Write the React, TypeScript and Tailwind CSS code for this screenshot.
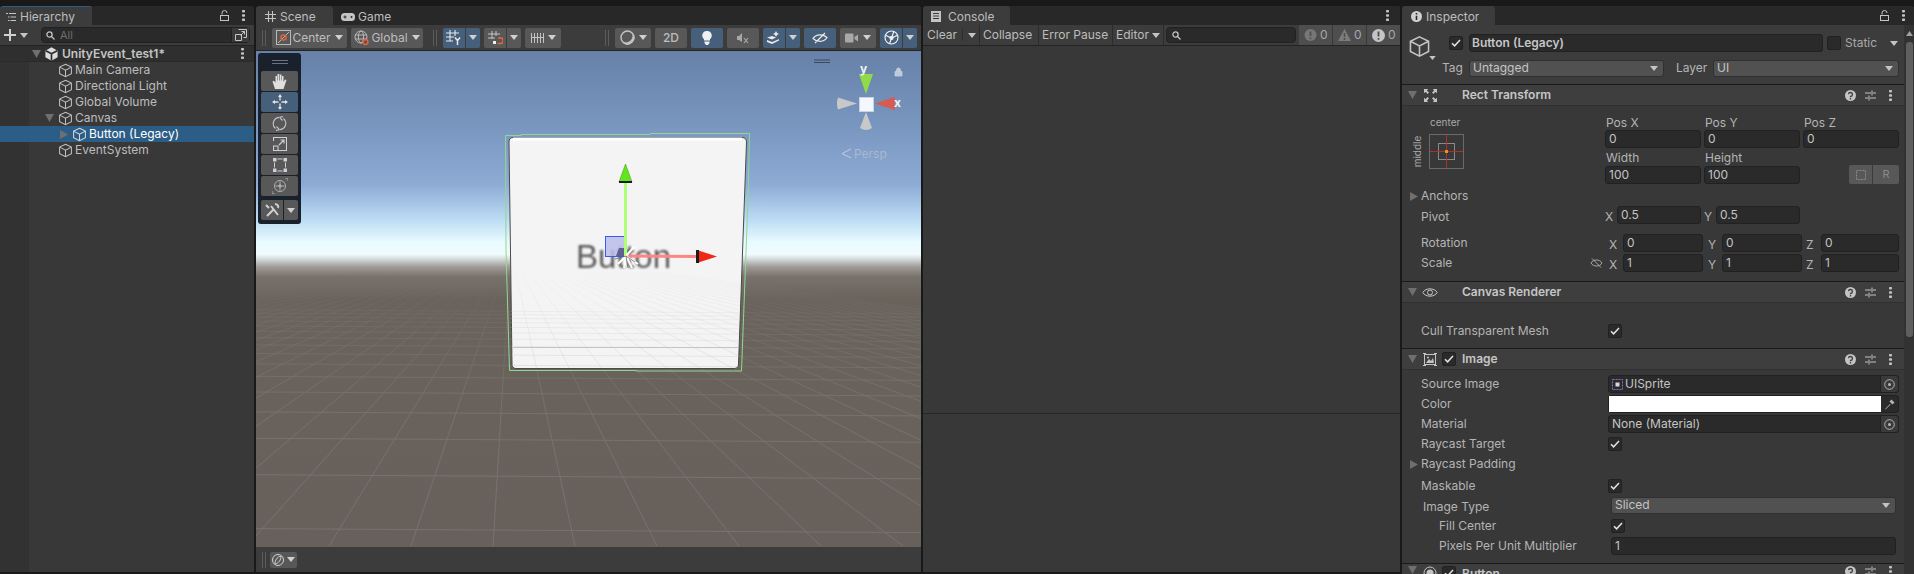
import React from "react";

const Caret = ({ c = "#c4c4c4", w = 8, h = 5 }: { c?: string; w?: number; h?: number }) => (
  <svg width={w} height={h} viewBox="0 0 8 5" className="shrink-0"><path d="M0 0H8L4 5Z" fill={c} /></svg>
);
const Down = ({ c = "#6f6f6f" }: { c?: string }) => (
  <svg width="9" height="8" viewBox="0 0 9 8" className="shrink-0"><path d="M0 0H9L4.5 8Z" fill={c} /></svg>
);
const Right = () => (
  <svg width="8" height="9" viewBox="0 0 8 9" className="shrink-0"><path d="M0 0V9L8 4.5Z" fill="#6f6f6f" /></svg>
);
const Cube = ({ c = "#c0c0c0", s = 15 }: { c?: string; s?: number }) => (
  <svg width={s} height={s} viewBox="0 0 16 16" fill="none" stroke={c} strokeWidth="1.1" className="shrink-0">
    <path d="M8 1.3 14.3 4.4V11.5L8 14.7 1.7 11.5V4.4ZM1.7 4.4 8 7.6 14.3 4.4M8 7.6V14.7" />
  </svg>
);
const Dots = ({ c = "#c4c4c4" }: { c?: string }) => (
  <svg width="3" height="11" viewBox="0 0 3 11" className="shrink-0" fill={c}>
    <rect y="0" width="3" height="2.4" rx=".8" /><rect y="4.3" width="3" height="2.4" rx=".8" /><rect y="8.6" width="3" height="2.4" rx=".8" />
  </svg>
);
const Lock = () => (
  <svg width="9" height="11" viewBox="0 0 9 11" fill="none" stroke="#c4c4c4" className="shrink-0">
    <path d="M2 4.5V3a2.5 2.5 0 0 1 5 0" /><rect x=".5" y="5.5" width="8" height="5" />
  </svg>
);
const Grip = () => (
  <div className="flex gap-[2px] h-[16px] shrink-0">
    <div className="w-[1px] bg-[#5c5c5c]" /><div className="w-[1px] bg-[#5c5c5c]" />
  </div>
);
const Mag = () => (
  <svg width="9" height="9" viewBox="0 0 9 9" fill="none" stroke="#c4c4c4" strokeWidth="1.3" className="shrink-0">
    <circle cx="3.5" cy="3.5" r="2.6" /><path d="M5.5 5.5 8.5 8.5" />
  </svg>
);
const Check = () => (
  <svg width="10" height="8" viewBox="0 0 10 8" fill="none" stroke="#e2e2e2" strokeWidth="1.5"><path d="M1 4.2 3.6 6.8 9 1" /></svg>
);
const CheckBox = ({ on = true }: { on?: boolean }) => (
  <div className="w-[14px] h-[14px] rounded-[2px] bg-[#2a2a2a] border border-[#212121] flex items-center justify-center shrink-0">{on && <Check />}</div>
);

const Tab = ({ icon, label, active, w, top }: { icon: React.ReactNode; label: string; active?: boolean; w: number; top?: boolean }) => (
  <div style={{ width: w }} className={`h-[19px] flex items-center text-[12px] text-[#bdbdbd] rounded-t-[3px] ${top ? "pt-[1px]" : "pt-[2px]"} ${active ? "bg-[#3c3c3c]" : ""} ${top ? "border-t border-[#2c5d87]" : ""}`}>
    {icon}<span className="truncate">{label}</span>
  </div>
);

/* ---------- Hierarchy ---------- */
const HRow = ({ indent, arrow, label, selected, down }: { indent: number; arrow?: boolean; label: string; selected?: boolean; down?: boolean }) => (
  <div className={`h-[16px] flex items-center ${selected ? "bg-[#2c5d87] text-white" : "text-[#bdbdbd]"} text-[12px]`}>
    <div className="shrink-0 flex justify-end items-center pr-[4px]" style={{ width: indent }}>
      {arrow && (down ? <Down /> : <Right />)}
    </div>
    <Cube c={selected ? "#d8d8d8" : "#c0c0c0"} />
    <span className="ml-[2px]">{label}</span>
  </div>
);

const Hierarchy = () => (
  <div className="w-[254px] shrink-0 bg-[#383838] flex flex-col rounded-t-[3px] overflow-hidden">
    <div className="h-[19px] bg-[#282828] flex items-center">
      <Tab
        w={92}
        top
        active
        label="Hierarchy"
        icon={
          <svg width="12" height="10" viewBox="0 0 12 10" stroke="#c4c4c4" className="ml-[5px] mr-[3px]">
            <path d="M1 1.5H3M4 1.5H11M3 5H4.5M5.5 5H11M3 8.5H4.5M5.5 8.5H11" />
          </svg>
        }
      />
      <div className="ml-auto flex items-center gap-[13px] pr-[9px]"><Lock /><Dots /></div>
    </div>
    <div className="h-[21px] bg-[#3c3c3c] flex items-center border-b border-[#232323] pl-[4px] pr-[4px]">
      <svg width="12" height="12" viewBox="0 0 12 12" fill="#d0d0d0" className="shrink-0"><path d="M5 0H7V5H12V7H7V12H5V7H0V5H5Z" /></svg>
      <div className="ml-[4px]"><Caret /></div>
      <div className="ml-[13px] flex-1 h-[16px] rounded-[4px] bg-[#2a2a2a] border border-[#212121] flex items-center pl-[4px]">
        <Mag />
        <span className="ml-[5px] text-[11px] text-[#6f6f6f]">All</span>
        <div className="ml-auto w-[18px] h-[14px] flex items-center justify-center border-l border-[#212121] bg-[#3a3a3a]">
          <svg width="12" height="12" viewBox="0 0 12 12" fill="none" stroke="#c4c4c4"><path d="M3.5 .5H11.5V8.5H8.5M.5 5.5H6.5V11.5H.5ZM5.5 6.5 9.5 2.5M6.5 2.5H9.5V5.5" /></svg>
        </div>
      </div>
    </div>
    <div className="flex-1 bg-[linear-gradient(to_right,#323232_29px,#383838_29px)]">
      <div className="h-[16px] bg-[#2f2f2f] border-b border-[#2a2a2a] flex items-center text-[12px] font-semibold text-[#c4c4c4]">
        <div className="w-[44px] flex justify-end pr-[3px]"><Down /></div>
        <svg width="13" height="14" viewBox="0 0 13 14" className="shrink-0 ml-[1px]">
          <path d="M6.5 .3 12.6 3.7V10.3L6.5 13.7.4 10.3V3.7Z" fill="#dcdcdc" />
          <path d="M6.5 6.8V13.7M6.5 6.8.8 3.7M6.5 6.8 12.2 3.7" stroke="#2f2f2f" strokeWidth="1.7" />
        </svg>
        <span className="ml-[4px]">UnityEvent_test1*</span>
        <div className="ml-auto pr-[10px]"><Dots /></div>
      </div>
      <HRow indent={58} label="Main Camera" />
      <HRow indent={58} label="Directional Light" />
      <HRow indent={58} label="Global Volume" />
      <HRow indent={58} arrow down label="Canvas" />
      <HRow indent={72} arrow selected label="Button (Legacy)" />
      <HRow indent={58} label="EventSystem" />
    </div>
  </div>
);

/* ---------- Scene toolbar ---------- */
const TB = ({ w, blue, children, ml = 4 }: { w: number; blue?: boolean; children?: React.ReactNode; ml?: number }) => (
  <div style={{ width: w, marginLeft: ml }} className={`h-[20px] rounded-[2px] shrink-0 flex items-center justify-center ${blue ? "bg-[#46607c]" : "bg-[#585858]"}`}>{children}</div>
);
const Split = ({ w, blue, children, ml = 4 }: { w: number; blue?: boolean; children?: React.ReactNode; ml?: number }) => (
  <div style={{ width: w + 15, marginLeft: ml }} className="h-[20px] flex gap-[1px] shrink-0">
    <div className={`flex-1 rounded-l-[2px] flex items-center justify-center ${blue ? "bg-[#46607c]" : "bg-[#585858]"}`}>{children}</div>
    <div className={`w-[14px] rounded-r-[2px] flex items-center justify-center ${blue ? "bg-[#46607c]" : "bg-[#585858]"}`}><Caret c="#d0d0d0" /></div>
  </div>
);

const SceneToolbar = () => (
  <div className="h-[26px] bg-[#3c3c3c] border-b border-[#232323] flex items-center pl-[6px] text-[12px] text-[#bdbdbd]">
    <Grip />
    <TB w={75} ml={6}>
      <svg width="15" height="15" viewBox="0 0 15 15" fill="none" className="shrink-0">
        <rect x=".5" y=".5" width="14" height="14" stroke="#b8b8b8" />
        <path d="M2 13 13 2" stroke="#b8b8b8" /><circle cx="7.5" cy="7.5" r="2.6" stroke="#f0633a" strokeWidth="1.3" />
      </svg>
      <span className="ml-[1px]">Center</span><div className="ml-[4px]"><Caret c="#d0d0d0" /></div>
    </TB>
    <TB w={72}>
      <svg width="16" height="16" viewBox="0 0 16 16" fill="none" stroke="#b8b8b8" className="shrink-0">
        <circle cx="7" cy="7" r="6" /><ellipse cx="7" cy="7" rx="2.6" ry="6" /><path d="M1 5H13M1 9H13" />
        <circle cx="11.5" cy="12" r="2.5" stroke="#f0633a" strokeWidth="1.3" fill="#585858" />
      </svg>
      <span className="ml-[1px]">Global</span><div className="ml-[4px]"><Caret c="#d0d0d0" /></div>
    </TB>
    <div className="ml-[10px]"><Grip /></div>
    <Split w={22} blue ml={6}>
      <svg width="16" height="15" viewBox="0 0 16 15" fill="none" stroke="#e8e8e8" strokeWidth="1.1"><path d="M4 0V11M9 0V6M0 3H13M0 7H8M0 11H7" /><path d="M9 7.500 11.500 10.500 14 7.500M11.500 10.500V15" strokeWidth="1.500" /></svg>
    </Split>
    <Split w={22}>
      <svg width="15" height="14" viewBox="0 0 15 14" fill="none"><path d="M4 0V8M8 0V5M0 3H12M0 7H7" stroke="#c4c4c4" /><rect x="5" y="10" width="3" height="3" fill="#f0f0f0" /><path d="M10 7H12.5A2.5 2.5 0 0 1 12.5 12.5H9.5" stroke="#f0633a" strokeWidth="1.6" /></svg>
    </Split>
    <TB w={36}>
      <svg width="13" height="12" viewBox="0 0 13 12" stroke="#c4c4c4" className="shrink-0"><path d="M.5 1V11M3.5 1V11M6.5 1V11M9.5 1V11M12.5 1V11M0 5.5H13" /></svg>
      <div className="ml-[4px]"><Caret c="#d0d0d0" /></div>
    </TB>
    <div className="ml-[44px]"><Grip /></div>
    <TB w={36} ml={6}>
      <svg width="15" height="15" viewBox="0 0 15 15" fill="none" className="shrink-0">
        <circle cx="7.5" cy="7.5" r="6.5" stroke="#c4c4c4" strokeWidth="1.4" /><path d="M13 4.500A6.500 6.500 0 0 1 3 12.500 7.500 7.500 0 0 0 13 4.500Z" fill="#c4c4c4" stroke="#c4c4c4" />
      </svg>
      <div className="ml-[4px]"><Caret c="#d0d0d0" /></div>
    </TB>
    <TB w={32}><span className="font-medium">2D</span></TB>
    <TB w={32} blue>
      <svg width="10" height="14" viewBox="0 0 10 14" fill="#f0f0f0"><path d="M5 0A4.6 4.6 0 0 1 8 8.2V9.5H2V8.2A4.6 4.6 0 0 1 5 0ZM2.5 10.5H7.5V12L6 14H4L2.5 12Z" /></svg>
    </TB>
    <TB w={32}>
      <svg width="13" height="12" viewBox="0 0 13 12" fill="none"><path d="M0 4H2L5 1V10L2 8H0Z" fill="#a8a8a8" /><path d="M7 6 11 11M11 6 7 11" stroke="#a8a8a8" strokeWidth="1.2" /></svg>
    </TB>
    <Split w={22} blue>
      <svg width="14" height="14" viewBox="0 0 14 14" fill="#eaeaea"><path d="M9 0 10 2 12 3 10 4 9 6 8 4 6 3 8 2ZM0 6.5 5 5 9 6.5 5 8.5ZM0 9 5 11 10 9 12 8V9.5L5 13 0 11ZM0 9.5" /></svg>
    </Split>
    <TB w={32} blue>
      <svg width="16" height="12" viewBox="0 0 16 12" fill="none" stroke="#e8e8e8" strokeWidth="1.2"><path d="M1 6.5C4 2 11 1.500 15 5.500 12 10.500 5 10.500 1 6.500ZM3 11 13 1" /></svg>
    </TB>
    <TB w={36}>
      <svg width="13" height="10" viewBox="0 0 13 10" fill="#a8a8a8" className="shrink-0"><rect width="8.500" height="9" y=".5" rx="1" /><path d="M9.500 4 13 1.500V8.500L9.500 6Z" /></svg>
      <div className="ml-[5px]"><Caret c="#d0d0d0" /></div>
    </TB>
    <Split w={22} blue>
      <svg width="15" height="15" viewBox="0 0 15 15" fill="none" stroke="#f0f0f0" strokeWidth="1.2"><circle cx="7.500" cy="7.500" r="6.500" /><path d="M2 5.500 7.500 8 13 5.500M7.500 8 5.500 14M7.500 8 10 1" /><circle cx="7.500" cy="8" r="1.500" fill="#f0f0f0" /></svg>
    </Split>
  </div>
);

/* ---------- Scene viewport drawing ---------- */
const VP = { x: 511, y: 250 };
const radial = Array.from({ length: 51 }, (_, i) => i - 25).map((k) => {
  const bx = 493 + 82 * k;
  const t0 = 22 / 296;
  return { x1: VP.x + (bx - VP.x) * t0, y1: VP.y + 22, x2: bx, y2: 546 };
});
const rows = Array.from({ length: 16 }, (_, i) => {
  const inv = 0.00357 + 0.00085 * i;
  const y = 250 + 1 / inv;
  return { y1: y - 1.5, y2: y + 2.5 };
});

const GridLines = ({ stroke }: { stroke: string }) => (
  <g stroke={stroke} strokeWidth="1" fill="none">
    {radial.map((l, i) => <line key={i} {...l} />)}
    {rows.map((r, i) => <line key={i} x1="256" y1={r.y1} x2="921" y2={r.y2} />)}
  </g>
);

const ToolBtn = ({ blue, children }: { blue?: boolean; children: React.ReactNode }) => (
  <div className={`h-[20px] rounded-[2px] flex items-center justify-center ${blue ? "bg-[#46607c]" : "bg-[#585858]"}`}>{children}</div>
);

const ToolOverlay = () => (
  <div className="absolute left-[2px] top-[2px] w-[43px] h-[171px] bg-[#18212c] rounded-[3px] px-[3px] flex flex-col">
    <div className="h-[18px] flex flex-col items-center justify-center gap-[2px]">
      <div className="w-[16px] h-[1px] bg-[#6a7480]" /><div className="w-[16px] h-[1px] bg-[#6a7480]" />
    </div>
    <div className="flex flex-col gap-[1px]">
      <ToolBtn>
        <svg width="15" height="16" viewBox="0 0 15 16" fill="#e0e0e0"><path d="M3 16 .5 8.500 1.800 7.800 3.500 9.500V3H5V7.500H5.500V1H7.200V7.500H7.800V1.500H9.500V7.500H10V3H11.500V9L13 6.500 14.500 7 11.500 16Z" /></svg>
      </ToolBtn>
      <ToolBtn blue>
        <svg width="16" height="16" viewBox="0 0 16 16" fill="none" stroke="#e4e4e4" strokeWidth="1.300"><path d="M8 3V6.500M8 9.500V13M3 8H6.500M9.500 8H13" /><path d="M8 0 10 3H6ZM8 16 6 13H10ZM0 8 3 6V10ZM16 8 13 10V6Z" fill="#e4e4e4" stroke="none" /></svg>
      </ToolBtn>
      <ToolBtn>
        <svg width="15" height="15" viewBox="0 0 15 15" fill="none" stroke="#c4c4c4" strokeWidth="1.100"><path d="M3.500 12.500A6.300 6.300 0 0 1 7 1.400M11.500 2.500A6.300 6.300 0 0 1 8 13.600" /><path d="M7.500 1.300 11 .6M7.500 1.300 10.500 4.500M7.500 13.700 4 14.400M7.500 13.700 4.500 10.500" /></svg>
      </ToolBtn>
      <ToolBtn>
        <svg width="14" height="14" viewBox="0 0 14 14" fill="none" stroke="#d0d0d0" strokeWidth="1.100"><path d="M.5 4V.5H13.500V13.500H4M.5 9H5V13.500H.5ZM6 8 11 3M7.500 3H11V6.500" /></svg>
      </ToolBtn>
      <ToolBtn>
        <svg width="14" height="14" viewBox="0 0 14 14" fill="#d0d0d0"><rect width="3.500" height="3.500" /><rect x="10.500" width="3.500" height="3.500" /><rect y="10.500" width="3.500" height="3.500" /><rect x="10.500" y="10.500" width="3.500" height="3.500" /><path d="M4.500 1H9.500M4.500 13H9.500M1.500 4.500V9.500M12.500 4.500V9.500" stroke="#d0d0d0" /></svg>
      </ToolBtn>
      <ToolBtn>
        <svg width="16" height="16" viewBox="0 0 16 16" fill="none" stroke="#b0b0b0"><circle cx="8" cy="8" r="5.500" /><path d="M8 3.500V12.500M3.500 8H12.500M0 13V16H3M13 0H16V3" /><path d="M6 8 8 6 10 8 8 10Z" fill="#b0b0b0" stroke="none" /></svg>
      </ToolBtn>
    </div>
    <div className="flex gap-[1px] h-[20px] mt-[4px]">
      <div className="w-[22px] bg-[#585858] rounded-l-[2px] flex items-center justify-center">
        <svg width="15" height="15" viewBox="0 0 15 15" fill="none" stroke="#d0d0d0" strokeWidth="2"><path d="M2 13 9 6M6 3 13 12M10 1C12 1 14 3 13 5M1 2 4 5" /></svg>
      </div>
      <div className="w-[14px] bg-[#585858] rounded-r-[2px] flex items-center justify-center"><Caret c="#d0d0d0" /></div>
    </div>
  </div>
);

const SceneArt = () => (
  <svg viewBox="256 51 665 496" width="665" height="496" className="block">
    <defs>
      <clipPath id="spriteClip"><path d="M513 138H742Q746 138 746 142L738 364Q738 368 734 368H516Q512 368 512 364L509 142Q509 138 513 138Z" /></clipPath>
      <linearGradient id="fadeGround" gradientUnits="userSpaceOnUse" x1="0" y1="268" x2="0" y2="420">
        <stop offset="0" stopColor="#767270" stopOpacity="0" /><stop offset=".4" stopColor="#767270" stopOpacity=".5" /><stop offset="1" stopColor="#767270" stopOpacity="1" />
      </linearGradient>
      <linearGradient id="fadeSprite" gradientUnits="userSpaceOnUse" x1="0" y1="262" x2="0" y2="365">
        <stop offset="0" stopColor="#dedede" stopOpacity="0" /><stop offset=".4" stopColor="#dedede" stopOpacity=".35" /><stop offset="1" stopColor="#d8d8d8" stopOpacity=".6" />
      </linearGradient>
    </defs>
    <GridLines stroke="url(#fadeGround)" />
    <path d="M513 137.500H742Q746.500 137.500 746.500 142L738.500 364Q738.500 368.500 734 368.500H516Q512 368.500 512 364L509 142Q509 137.500 513 137.500Z" fill="#f4f4f4" stroke="#4a4a4a" strokeWidth="1" />
    <path d="M513 139H742" stroke="#ffffff" strokeWidth="3" />
    <g clipPath="url(#spriteClip)"><GridLines stroke="url(#fadeSprite)" /></g>
    <path d="M512 347.500H738" stroke="#c4c4c4" />
    <path d="M505.500 135.500H521V134.500H650V133.500H749.500L748 200 741.500 371H636V370.500H509.500L506 250Z" fill="none" stroke="#90d890" strokeWidth="1" />
    <text x="576" y="268" fontFamily="Liberation Sans, sans-serif" fontSize="33" fill="#5a5a5a" textLength="95" className="blur-[1px]">Button</text>
    <rect x="605.500" y="236.500" width="19" height="20" fill="#b8bcea" fillOpacity=".85" stroke="#3a5af0" />
    <path d="M619 248 616 256H624V248ZM619 248" fill="#5f5f90" />
    <line x1="626" y1="256" x2="697" y2="256.500" stroke="#ff8585" strokeWidth="3" />
    <path d="M697 250V263L717 256.500Z" fill="#ee2a16" />
    <rect x="696" y="250" width="3" height="13" fill="#1c1c1c" />
    <line x1="625.500" y1="256" x2="625.500" y2="182" stroke="#aeff78" strokeWidth="3" />
    <path d="M625.500 164 619 182H632Z" fill="#62e61e" stroke="#3a8a10" strokeWidth=".5" />
    <rect x="619" y="181" width="13" height="2" fill="#1c1c1c" />
    <g stroke="#ffffff" strokeWidth="2">
      <path d="M626 256 618 264M626 256 624 268M626 256 632 268M626 256 638 264M626 256 634 247" />
    </g>
    <g stroke="#555" strokeWidth=".7"><path d="M626 256 615 259M626 256 628 268M626 256 635 262" /></g>
    {/* orientation gizmo */}
    <path d="M859 74 L873 74 L866 94Z" fill="#8fdc48" />
    <path d="M875 103.500 L895 97 V110Z" fill="#d85a50" />
    <path d="M857 103.500 L838 97.500Q836 103.500 838 109.500Z" fill="#c8c8c8" />
    <path d="M866 112 L860 128Q866 132 872 128Z" fill="#c8c8c8" />
    <rect x="859.500" y="97.500" width="14" height="14" fill="#f4f7ff" stroke="#c7d2e4" />
    <text x="860" y="73" fontFamily="Inter, sans-serif" fontSize="12" fontWeight="700" fill="#eef2f8">y</text>
    <text x="894" y="107" fontFamily="Inter, sans-serif" fontSize="12" fontWeight="700" fill="#eef2f8">x</text>
    <path d="M895 71.500H902V76H895ZM896.500 71.500V70A2 2 0 0 1 900.500 70V71.500" fill="#c8d2e0" stroke="#c8d2e0" fillOpacity=".9" strokeWidth=".7" />
    <path d="M814 60H830M814 62.500H830" stroke="#3d4a5c" />
    <path d="M851 149 842 153.500 851 158" fill="none" stroke="#c3cede" />
    <text x="854" y="158" fontFamily="Inter, sans-serif" fontSize="12" fill="#a9b9ce">Persp</text>
  </svg>
);

const Scene = () => (
  <div className="w-[665px] shrink-0 bg-[#3c3c3c] flex flex-col rounded-t-[3px] overflow-hidden">
    <div className="h-[19px] bg-[#282828] flex items-center">
      <Tab
        w={77}
        active
        label="Scene"
        icon={<svg width="11" height="11" viewBox="0 0 11 11" stroke="#c4c4c4" strokeWidth="1.1" className="ml-[9px] mr-[4px]"><path d="M3.500 0V11M7.500 0V11M0 3.500H11M0 7.500H11" /></svg>}
      />
      <div className="flex items-center text-[12px] text-[#bdbdbd] ml-[8px] pt-[2px]">
        <svg width="14" height="8" viewBox="0 0 14 8" className="mr-[3px]"><rect width="14" height="8" rx="3.500" fill="#c4c4c4" /><path d="M2.500 4H5.500M4 2.500V5.500" stroke="#2a2a2a" /><circle cx="10.500" cy="4" r="1" fill="#2a2a2a" /></svg>
        Game
      </div>
    </div>
    <SceneToolbar />
    <div className="relative h-[496px] overflow-hidden bg-[linear-gradient(to_bottom,#6781a8_0%,#7896bf_15%,#8eabd6_27%,#bcdcf4_34%,#e8fbff_38.500%,#f0fbfd_41%,#d2d8d8_42%,#a09c98_43.5%,#78726c_45.5%,#6a635c_50%,#68615b_100%)]">
      <SceneArt />
      <ToolOverlay />
    </div>
    <div className="h-[25px] flex items-center pl-[6px]">
      <Grip />
      <div className="ml-[4px] w-[27px] h-[16px] rounded-[2px] bg-[#585858] flex items-center justify-center gap-[3px]">
        <svg width="12" height="12" viewBox="0 0 12 12" fill="none" stroke="#d0d0d0"><circle cx="6" cy="6" r="5.500" /><path d="M3 10C3 6 5 3 9 2 9 6 7 9 3 10Z" /></svg>
        <Caret c="#d0d0d0" />
      </div>
    </div>
  </div>
);

/* ---------- Console ---------- */
const CBtn = ({ w, children }: { w: number; children: React.ReactNode }) => (
  <div style={{ width: w }} className="h-[20px] shrink-0 border-r border-[#2c2c2c] flex items-center pl-[3px] text-[12px] text-[#bdbdbd]">{children}</div>
);
const Count = ({ w, icon, ml = 0 }: { w: number; icon: React.ReactNode; ml?: number }) => (
  <div style={{ width: w, marginLeft: ml }} className="h-[20px] shrink-0 bg-[#4e4e4e] flex items-center pl-[5px] gap-[3px] text-[12px] text-[#a8a8a8] border-r border-[#383838]">{icon}<span>0</span></div>
);

const Console = () => (
  <div className="w-[477px] shrink-0 bg-[#383838] flex flex-col rounded-t-[3px] overflow-hidden">
    <div className="h-[19px] bg-[#282828] flex items-center">
      <Tab
        w={87}
        active
        label="Console"
        icon={<svg width="11" height="11" viewBox="0 0 11 11" className="ml-[8px] mr-[6px]"><path d="M0 0H10V11H0ZM2 2V3H8V2ZM2 4.500V5.500H8V4.500ZM2 7V8H8V7Z" fill="#c4c4c4" fillRule="evenodd" /></svg>}
      />
      <div className="ml-auto pr-[11px]"><Dots /></div>
    </div>
    <div className="h-[21px] bg-[#3c3c3c] border-b border-[#232323] flex items-center">
      <CBtn w={57}>
        <span className="ml-[1px]">Clear</span><div className="ml-[5px] w-[1px] h-[12px] bg-[#2c2c2c]" /><div className="ml-[5px]"><Caret /></div>
      </CBtn>
      <CBtn w={59}>Collapse</CBtn>
      <CBtn w={74}>Error Pause</CBtn>
      <CBtn w={51}>Editor<div className="ml-[3px]"><Caret /></div></CBtn>
      <div className="ml-[2px] w-[130px] h-[16px] rounded-[4px] bg-[#2a2a2a] border border-[#212121] flex items-center pl-[5px] shrink-0"><Mag /></div>
      <Count
        w={34}
        ml={3}
        icon={<svg width="13" height="13" viewBox="0 0 13 13"><circle cx="6.500" cy="6" r="6" fill="#777" /><path d="M6.500 2.500V7M6.500 8.500V10" stroke="#4e4e4e" strokeWidth="1.800" /></svg>}
      />
      <Count
        w={34}
        icon={<svg width="13" height="12" viewBox="0 0 13 12"><path d="M6.500 0 13 12H0Z" fill="#7c7c7c" /><path d="M6.500 4V8M6.500 9V11" stroke="#4e4e4e" strokeWidth="1.500" /></svg>}
      />
      <Count
        w={34}
        icon={<svg width="13" height="13" viewBox="0 0 13 13"><circle cx="6.500" cy="6.500" r="6.500" fill="#c4c4c4" /><path d="M6.500 2.500V7.500M6.500 9V10.800" stroke="#4e4e4e" strokeWidth="1.800" /></svg>}
      />
    </div>
    <div className="h-[368px] border-b border-[#262626]" />
    <div className="flex-1" />
  </div>
);

/* ---------- Inspector ---------- */
const Field = ({ w, children, grow }: { w?: number; children?: React.ReactNode; grow?: boolean }) => (
  <div style={w ? { width: w } : undefined} className={`h-[18px] shrink-0 ${grow ? "flex-1" : ""} rounded-[3px] bg-[#2a2a2a] border border-[#212121] flex items-center pl-[3px] text-[12px] text-[#c4c4c4]`}>{children}</div>
);
const Drop = ({ w, label }: { w: number; label: string }) => (
  <div style={{ width: w }} className="h-[17px] shrink-0 rounded-[3px] bg-[#515151] border border-[#303030] flex items-center justify-between pl-[3px] pr-[5px] text-[12px] text-[#c4c4c4]">
    <span>{label}</span><Caret />
  </div>
);
const Label = ({ children, cls = "" }: { children: React.ReactNode; cls?: string }) => (
  <span className={`text-[12px] text-[#b4b4b4] ${cls}`}>{children}</span>
);
const Row = ({ label, h = 20, pl = 19, children, arrow }: { label?: string; h?: number; pl?: number; children?: React.ReactNode; arrow?: boolean }) => (
  <div style={{ height: h }} className="flex items-center">
    <div style={{ paddingLeft: pl }} className="w-[206px] shrink-0 relative flex items-center">
      {arrow && <div className="absolute left-[8px]"><Right /></div>}
      <Label>{label}</Label>
    </div>
    {children}
  </div>
);
const SectionIcons = () => (
  <div className="ml-auto flex items-center pr-[12px]">
    <svg width="11" height="11" viewBox="0 0 11 11"><circle cx="5.500" cy="5.500" r="5.500" fill="#c4c4c4" /><path d="M3.500 4.200A2 2 0 1 1 5.500 6.500V7.300M5.500 8V9.500" fill="none" stroke="#3e3e3e" strokeWidth="1.300" /></svg>
    <svg width="11" height="11" viewBox="0 0 11 11" stroke="#c4c4c4" fill="none" className="ml-[9px]"><path d="M0 3H6M8 3H11M0 8H3M5 8H11M7 .5V5.500M4 5.500V10.500" /></svg>
    <div className="ml-[13px]"><Dots /></div>
  </div>
);
const Header = ({ icon, title, check }: { icon: React.ReactNode; title: string; check?: boolean }) => (
  <div className="h-[22px] shrink-0 bg-[#3e3e3e] border-t border-[#1a1a1a] border-b-[1px] border-b-[#303030] flex items-center pl-[6px]">
    <Down />
    <div className="w-[16px] ml-[5px] flex justify-center shrink-0">{icon}</div>
    <div className="ml-[4px] w-[16px]">{check && <CheckBox />}</div>
    <span className="ml-[4px] text-[12px] font-semibold text-[#c6c6c6]">{title}</span>
    <SectionIcons />
  </div>
);
const Pick = () => (
  <div className="ml-auto w-[18px] h-full flex items-center justify-center bg-[#3a3a3a] border-l border-[#212121] rounded-r-[3px] shrink-0">
    <svg width="11" height="11" viewBox="0 0 11 11" fill="none" stroke="#b4b4b4"><circle cx="5.500" cy="5.500" r="4.800" /><circle cx="5.500" cy="5.500" r="1.500" fill="#b4b4b4" stroke="none" /></svg>
  </div>
);

const PosCol = ({ label, w, value }: { label: string; w: number; value: string }) => (
  <div style={{ width: w }} className="shrink-0 flex flex-col">
    <div className="h-[15px] pl-[1px] flex items-center"><Label>{label}</Label></div>
    <Field w={w}>{value}</Field>
  </div>
);

const Triple = ({ label, v, icon }: { label: string; v: string; icon?: boolean }) => (
  <div className="h-[18px] flex items-center">
    <div className="w-[207px] pl-[19px] pr-[6px] shrink-0 flex items-center justify-between">
      <Label>{label}</Label>
      {icon && <svg width="13" height="10" viewBox="0 0 13 10" fill="none" stroke="#a8a8a8"><path d="M1 5C3 1 10 1 12 5 10 9 3 9 1 5ZM2 .5 11 9.500" /></svg>}
    </div>
    <div className="w-[14px]"><Label>X</Label></div><Field w={80}>{v}</Field>
    <div className="w-[14px] ml-[5px]"><Label>Y</Label></div><Field w={80}>{v}</Field>
    <div className="w-[15px] ml-[4px]"><Label>Z</Label></div><Field w={78}>{v}</Field>
  </div>
);

const RectTransform = () => (
  <div className="h-[175px] shrink-0 bg-[#383838] pt-[9px] pr-[5px]">
    <div className="flex h-[70px]">
      <div className="w-[203px] shrink-0 relative">
        <span className="absolute left-[28px] top-[0px] text-[10px] text-[#a8a8a8]">center</span>
        <span className="absolute left-[0px] top-[29px] text-[10px] text-[#a8a8a8] -rotate-90">middle</span>
        <svg width="36" height="36" viewBox="0 0 36 36" className="absolute left-[27px] top-[19px]" fill="none">
          <rect x=".5" y=".5" width="34" height="34" stroke="#6a6a6a" />
          <rect x="9.500" y="9.500" width="16" height="16" stroke="#8a8a8a" />
          <path d="M17.500 1V34M1 17.500H34" stroke="#b03030" />
          <rect x="16" y="16" width="3" height="3" fill="#d69a1c" />
        </svg>
      </div>
      <div className="flex-1 flex flex-col">
        <div className="flex gap-[3px]">
          <PosCol label="Pos X" w={96} value="0" />
          <PosCol label="Pos Y" w={96} value="0" />
          <PosCol label="Pos Z" w={96} value="0" />
        </div>
        <div className="flex gap-[3px] mt-[1px]">
          <div className="w-[96px] shrink-0 flex flex-col"><div className="h-[17px] pl-[1px] flex items-start"><Label>Width</Label></div><Field w={96}>100</Field></div>
          <div className="w-[96px] shrink-0 flex flex-col"><div className="h-[17px] pl-[1px] flex items-start"><Label>Height</Label></div><Field w={96}>100</Field></div>
          <div className="w-[96px] flex justify-end items-end">
            <div className="w-[50px] h-[19px] rounded-[2px] bg-[#585858] flex text-[11px] text-[#8a8a8a]">
              <div className="w-[24px] border-r border-[#3a3a3a] flex items-center justify-center">
                <svg width="10" height="10" viewBox="0 0 10 10" fill="none" stroke="#8a8a8a" strokeDasharray="2 1"><rect x=".5" y=".5" width="9" height="9" /></svg>
              </div>
              <div className="flex-1 flex items-center justify-center">R</div>
            </div>
          </div>
        </div>
      </div>
    </div>
    <div className="h-[16px] mt-[3px] flex items-center relative pl-[19px]">
      <div className="absolute left-[8px]"><Right /></div><Label>Anchors</Label>
    </div>
    <div className="h-[18px] mt-[2px] flex items-center">
      <div className="w-[203px] pl-[19px] shrink-0"><Label>Pivot</Label></div>
      <div className="w-[12px]"><Label>X</Label></div><Field w={84}>0.5</Field>
      <div className="w-[12px] ml-[3px]"><Label>Y</Label></div><Field w={84}>0.5</Field>
    </div>
    <div className="mt-[10px]"><Triple label="Rotation" v="0" /></div>
    <div className="mt-[2px]"><Triple label="Scale" v="1" icon /></div>
  </div>
);

const Inspector = () => (
  <div className="flex-1 bg-[#383838] flex flex-col rounded-t-[3px] overflow-hidden h-[568px]">
    <div className="h-[19px] shrink-0 bg-[#282828] flex items-center">
      <Tab
        w={93}
        active
        label="Inspector"
        icon={<svg width="11" height="11" viewBox="0 0 11 11" className="ml-[9px] mr-[4px]"><circle cx="5.500" cy="5.500" r="5.500" fill="#d0d0d0" /><path d="M5.500 2V3.500M5.500 4.800V9" stroke="#2a2a2a" strokeWidth="1.600" /></svg>}
      />
      <div className="ml-auto flex items-center gap-[13px] pr-[9px]"><Lock /><Dots /></div>
    </div>
    <div className="flex flex-1 min-h-0">
      <div className="w-[502px] shrink-0 flex flex-col overflow-hidden">
        <div className="h-[59px] shrink-0 bg-[#3c3c3c] relative">
          <div className="absolute left-[6px] top-[10px]"><Cube c="#c4c4c4" s={23} /></div>
          <div className="absolute left-[27px] top-[31px]"><Caret c="#c4c4c4" w={7} h={4} /></div>
          <div className="absolute left-[47px] top-[9px] flex items-center">
            <CheckBox />
            <div className="ml-[6px] w-[354px] h-[18px] rounded-[3px] bg-[#2a2a2a] border border-[#212121] flex items-center pl-[2px] text-[12px] font-semibold text-[#c6c6c6]">Button (Legacy)</div>
            <div className="ml-[4px]"><CheckBox on={false} /></div>
            <span className="ml-[4px] text-[12px] text-[#a8a8a8]">Static</span>
            <div className="ml-[13px]"><Caret /></div>
          </div>
          <div className="absolute left-[40px] top-[34px] flex items-center">
            <Label cls="w-[27px]">Tag</Label>
            <Drop w={195} label="Untagged" />
            <Label cls="ml-[12px] w-[37px]">Layer</Label>
            <Drop w={186} label="UI" />
          </div>
        </div>
        <Header
          title="Rect Transform"
          icon={<svg width="13" height="13" viewBox="0 0 13 13" fill="#c4c4c4"><path d="M0 0H4L3 1.800 5 3.500 3.500 5 1.800 3 0 4ZM13 0V4L11.200 3 9.500 5 8 3.500 10 1.800 9 0ZM0 13V9L1.800 10 3.500 8 5 9.500 3 11.200 4 13ZM13 13H9L10 11.200 8 9.500 9.500 8 11.200 10 13 9Z" /></svg>}
        />
        <RectTransform />
        <Header
          title="Canvas Renderer"
          icon={<svg width="16" height="11" viewBox="0 0 16 11" fill="none" stroke="#c4c4c4"><path d="M.8 5.500C3.500.6 12.500.6 15.200 5.500 12.500 10.400 3.500 10.400.8 5.500Z" /><circle cx="8" cy="5.500" r="2.500" /></svg>}
        />
        <div className="h-[45px] shrink-0 bg-[#383838] pt-[18px]">
          <Row label="Cull Transparent Mesh"><CheckBox /></Row>
        </div>
        <Header
          check
          title="Image"
          icon={<svg width="14" height="13" viewBox="0 0 14 13" fill="none" stroke="#c4c4c4"><rect x="1.500" y="1.500" width="11" height="10" /><path d="M0 .5H3M11 .5H14M0 12.500H3M11 12.500H14" /><path d="M3 10 6 6 8 8 10 5 11 10Z" fill="#c4c4c4" stroke="none" /><circle cx="5" cy="4.500" r="1" fill="#c4c4c4" stroke="none" /></svg>}
        />
        <div className="flex-1 bg-[#383838] pt-[4px]">
          <Row label="Source Image" h={20}>
            <div className="w-[291px] h-[18px] rounded-[3px] bg-[#2a2a2a] border border-[#212121] flex items-center pl-[3px] text-[12px] text-[#c4c4c4]">
              <svg width="11" height="11" viewBox="0 0 11 11" fill="none" className="mr-[2px]"><rect x=".5" y=".5" width="10" height="10" stroke="#8a6cc8" strokeDasharray="2 1" /><rect x="3.500" y="3.500" width="4" height="4" fill="#d8d8d8" /></svg>
              UISprite<Pick />
            </div>
          </Row>
          <Row label="Color" h={20}>
            <div className="w-[291px] h-[18px] rounded-[3px] bg-[#2a2a2a] border border-[#212121] flex items-center">
              <div className="w-[272px] h-full bg-white shrink-0" />
              <div className="flex-1 flex justify-center">
                <svg width="11" height="11" viewBox="0 0 11 11" fill="#b4b4b4"><path d="M7.500.5 10.500 3.500 8.500 5.500 5.500 2.500ZM6 5 1.500 9.500 1 10.500 2 10 6.500 5.500Z" /></svg>
              </div>
            </div>
          </Row>
          <Row label="Material" h={20}>
            <div className="w-[291px] h-[18px] rounded-[3px] bg-[#2a2a2a] border border-[#212121] flex items-center pl-[3px] text-[12px] text-[#c4c4c4]">
              None (Material)<Pick />
            </div>
          </Row>
          <Row label="Raycast Target"><CheckBox /></Row>
          <Row label="Raycast Padding" arrow />
          <Row label="Maskable" h={23}><CheckBox /></Row>
          <Row label="Image Type" pl={21} h={19}>
            <div className="ml-[3px] -mt-[3px]"><Drop w={285} label="Sliced" /></div>
          </Row>
          <Row label="Fill Center" pl={37} h={20}>
            <div className="ml-[3px]"><CheckBox /></div>
          </Row>
          <Row label="Pixels Per Unit Multiplier" pl={37} h={20}>
            <div className="ml-[3px]"><Field w={285}>1</Field></div>
          </Row>
        </div>
        <div className="h-[11px] shrink-0 bg-[#3e3e3e] border-t border-[#1a1a1a] flex items-start pl-[6px] pt-[2px] overflow-hidden text-[12px] font-semibold text-[#c6c6c6]">
          <Down />
          <svg width="14" height="14" viewBox="0 0 14 14" fill="none" stroke="#c4c4c4" className="ml-[6px] shrink-0"><circle cx="7" cy="7" r="6" /><circle cx="7" cy="7" r="3.500" fill="#c4c4c4" stroke="none" /></svg>
          <div className="ml-[5px]"><CheckBox /></div>
          <span className="ml-[6px] -mt-[1px]">Button</span>
          <SectionIcons />
        </div>
      </div>
      <div className="w-[10px] shrink-0 bg-[#323232] flex flex-col items-center">
        <svg width="7" height="5" viewBox="0 0 7 5" className="mt-[6px]"><path d="M0 5H7L3.500 0Z" fill="#a0a0a0" /></svg>
        <div className="mt-[6px] w-[7px] h-[295px] rounded-[3px] bg-[#5f5f5f]" />
      </div>
    </div>
  </div>
);

export default function App() {
  return (
    <div className="w-[1914px] h-[574px] overflow-hidden bg-[#191919] pt-[6px] font-['Inter',sans-serif]">
      <div className="flex h-[566px] gap-[2px]">
        <Hierarchy />
        <Scene />
        <Console />
        <Inspector />
      </div>
    </div>
  );
}
